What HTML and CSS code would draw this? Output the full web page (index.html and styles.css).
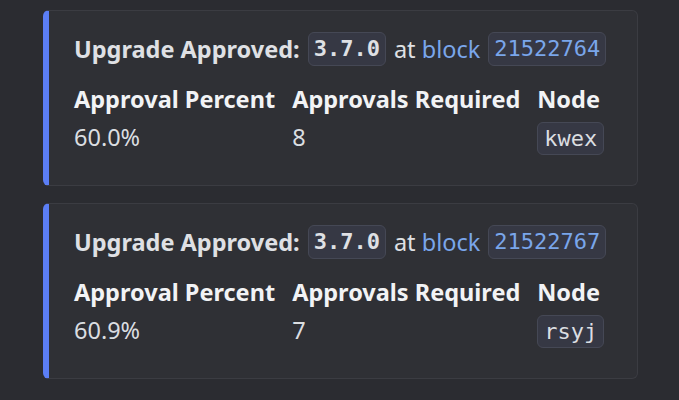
FILE: index.html
```html
<!DOCTYPE html>
<html lang="en">
<head>
<meta charset="UTF-8">
<title>Upgrade Approved</title>
<link rel="stylesheet" href="styles.css">
</head>
<body>
<div class="embed">
  <div class="embed-title">
    <span>Upgrade Approved:</span>
    <code class="chip bold">3.7.0</code>
    <span class="plain">at <a class="link">block</a></span>
    <code class="chip link">21522764</code>
  </div>
  <div class="fields">
    <div class="field">
      <div class="field-name">Approval Percent</div>
      <div class="field-value">60.0%</div>
    </div>
    <div class="field">
      <div class="field-name">Approvals Required</div>
      <div class="field-value">8</div>
    </div>
    <div class="field">
      <div class="field-name">Node</div>
      <div class="field-value"><code class="chip">kwex</code></div>
    </div>
  </div>
</div>

<div class="embed">
  <div class="embed-title">
    <span>Upgrade Approved:</span>
    <code class="chip bold">3.7.0</code>
    <span class="plain">at <a class="link">block</a></span>
    <code class="chip link">21522767</code>
  </div>
  <div class="fields">
    <div class="field">
      <div class="field-name">Approval Percent</div>
      <div class="field-value">60.9%</div>
    </div>
    <div class="field">
      <div class="field-name">Approvals Required</div>
      <div class="field-value">7</div>
    </div>
    <div class="field">
      <div class="field-name">Node</div>
      <div class="field-value"><code class="chip">rsyj</code></div>
    </div>
  </div>
</div>
</body>
</html>
```

FILE: styles.css
```css
body {
  margin: 0;
  padding: 10px 41px 0 43px;
  background: #2b2c31;
  color: #dbdee1;
  font-family: "Noto Sans", sans-serif;
  font-size: 23.5px;
}

.embed {
  height: 176px;
  box-sizing: border-box;
  margin-bottom: 17px;
  padding: 21px 22px 0 25px;
  background: #2f3035;
  border: 1px solid #3b3c42;
  border-left: 6px solid #5b7ef5;
  border-radius: 6px;
}

.embed-title {
  display: flex;
  align-items: center;
  gap: 8px;
  height: 34px;
  font-weight: 700;
  color: #dfe0e4;
}

.plain {
  font-weight: 400;
}

.link {
  color: #7aa6ea;
}

.chip {
  display: inline-block;
  box-sizing: border-box;
  height: 34px;
  line-height: 32px;
  padding: 0 5px;
  background: #363844;
  border: 1px solid #454855;
  border-radius: 6px;
  font-family: "DejaVu Sans Mono", monospace;
  font-size: 22px;
  font-weight: 400;
}

.chip.bold {
  font-weight: 700;
}

.fields {
  display: flex;
  gap: 17px;
  margin-top: 18px;
}

.field-name {
  font-weight: 700;
  line-height: 30px;
  color: #f2f3f5;
}

.field-value {
  height: 33px;
  line-height: 33px;
  margin-top: 7px;
}

.field-value .chip {
  height: 33px;
  line-height: 31px;
  padding: 0 6px;
}
```
